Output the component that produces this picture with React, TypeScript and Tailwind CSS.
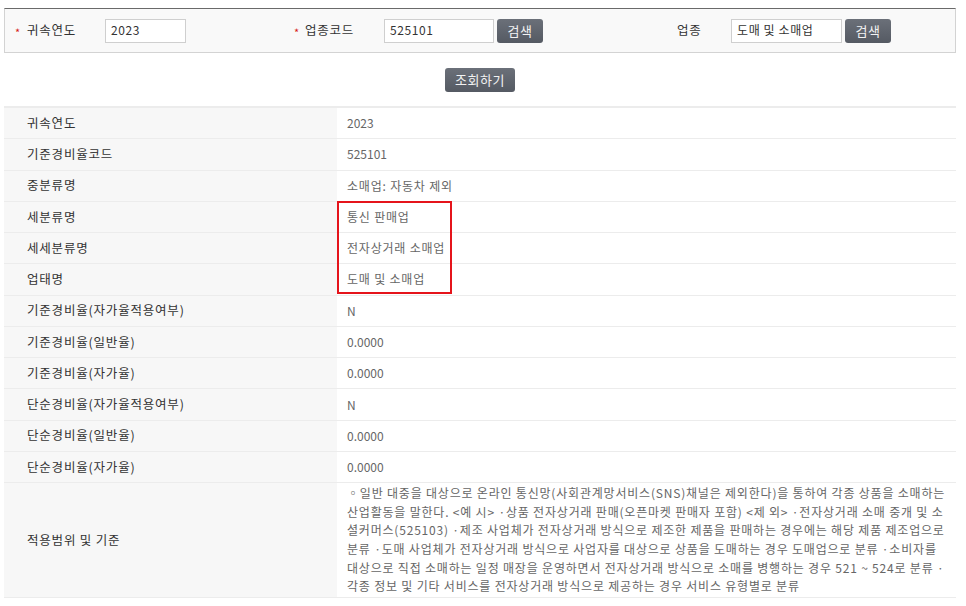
import React from "react";

const FONT = { fontFamily: '"Noto Sans CJK KR", "Noto Sans", sans-serif' };

const ROWS: [string, string][] = [
  ["귀속연도", "2023"],
  ["기준경비율코드", "525101"],
  ["중분류명", "소매업: 자동차 제외"],
  ["세분류명", "통신 판매업"],
  ["세세분류명", "전자상거래 소매업"],
  ["업태명", "도매 및 소매업"],
  ["기준경비율(자가율적용여부)", "N"],
  ["기준경비율(일반율)", "0.0000"],
  ["기준경비율(자가율)", "0.0000"],
  ["단순경비율(자가율적용여부)", "N"],
  ["단순경비율(일반율)", "0.0000"],
  ["단순경비율(자가율)", "0.0000"],
];

const SCOPE_LINES = [
  "◦일반 대중을 대상으로 온라인 통신망(사회관계망서비스(SNS)채널은 제외한다)을 통하여 각종 상품을 소매하는",
  "산업활동을 말한다. <예 시> ·상품 전자상거래 판매(오픈마켓 판매자 포함) <제 외> ·전자상거래 소매 중개 및 소",
  "셜커머스(525103) ·제조 사업체가 전자상거래 방식으로 제조한 제품을 판매하는 경우에는 해당 제품 제조업으로",
  "분류 ·도매 사업체가 전자상거래 방식으로 사업자를 대상으로 상품을 도매하는 경우 도매업으로 분류 ·소비자를",
  "대상으로 직접 소매하는 일정 매장을 운영하면서 전자상거래 방식으로 소매를 병행하는 경우 521 ~ 524로 분류 ·",
  "각종 정보 및 기타 서비스를 전자상거래 방식으로 제공하는 경우 서비스 유형별로 분류",
];

function Btn({ children, w }: { children: React.ReactNode; w: string }) {
  return (
    <button
      className={`${w} h-[24px] rounded-[3px] bg-gradient-to-b from-[#6b7079] to-[#555a63] text-[13px] tracking-[0.5px] text-[#f2f2f2] flex items-center justify-center`}
    >
      {children}
    </button>
  );
}

function Field({ value, w }: { value: string; w: string }) {
  return (
    <div className={`${w} h-[24px] border border-[#cfcfcf] bg-white px-[5px] pt-[1px] text-[12px] leading-[18px] tracking-[0.6px] text-[#333]`}>
      {value}
    </div>
  );
}

function Star() {
  return <span className="text-[#d71a1a] text-[11px] leading-none pt-[3px]">*</span>;
}

export default function App() {
  return (
    <div className="min-h-[606px] bg-white" style={FONT}>
      <div className="ml-[4px] w-[952px] pt-[8px]">
        {/* search bar */}
        <div className="h-[45px] border border-[#d3d3d3] border-t-[#6a6a6a] bg-[#f9f9f9] flex items-center">
          <div className="w-[90px] ml-[10px] flex items-center gap-[6px] text-[12.5px] tracking-[0.8px] text-[#333]">
            <Star />
            <span>귀속연도</span>
          </div>
          <Field value="2023" w="w-[81px]" />
          <div className="w-[90px] ml-[108px] flex items-center gap-[5px] text-[12.5px] tracking-[0.8px] text-[#333]">
            <Star />
            <span>업종코드</span>
          </div>
          <Field value="525101" w="w-[110px]" />
          <div className="ml-[3px]">
            <Btn w="w-[46px]">검색</Btn>
          </div>
          <div className="w-[54px] ml-[134px] text-[12.5px] tracking-[0.8px] text-[#333]">업종</div>
          <Field value="도매 및 소매업" w="w-[111px]" />
          <div className="ml-[3px]">
            <Btn w="w-[46px]">검색</Btn>
          </div>
        </div>

        <div className="flex justify-center pt-[15px] pb-[14px]">
          <Btn w="w-[70px]">조회하기</Btn>
        </div>

        {/* result table */}
        <div className="relative border-t-2 border-[#ececec] text-[12px] tracking-[0.8px]">
          {ROWS.map(([label, value]) => (
            <div key={label} className="flex h-[31.27px] border-b border-[#ececec]">
              <div className="w-[333px] bg-[#f7f7f7] pl-[23px] flex items-center text-[12.5px] text-[#333]">
                {label}
              </div>
              <div
                className={`flex-1 pl-[10px] flex items-center text-[#666] ${
                  /^[\d.N]+$/.test(value) ? "tracking-[0px]" : ""
                }`}
              >
                {value}
              </div>
            </div>
          ))}
          <div className="flex border-b border-[#ececec]">
            <div className="w-[333px] bg-[#f7f7f7] pl-[23px] flex items-center text-[12.5px] text-[#333]">
              적용범위 및 기준
            </div>
            <div className="flex-1 pl-[10px] py-[1px] leading-[18.6px] text-[#666] whitespace-nowrap">
              {SCOPE_LINES.map((l) => (
                <div key={l}>{l}</div>
              ))}
            </div>
          </div>

          {/* highlight box */}
          <div className="absolute left-[333px] top-[93px] w-[115px] h-[93px] border-2 border-[#e5141b]" />
        </div>
      </div>
    </div>
  );
}
